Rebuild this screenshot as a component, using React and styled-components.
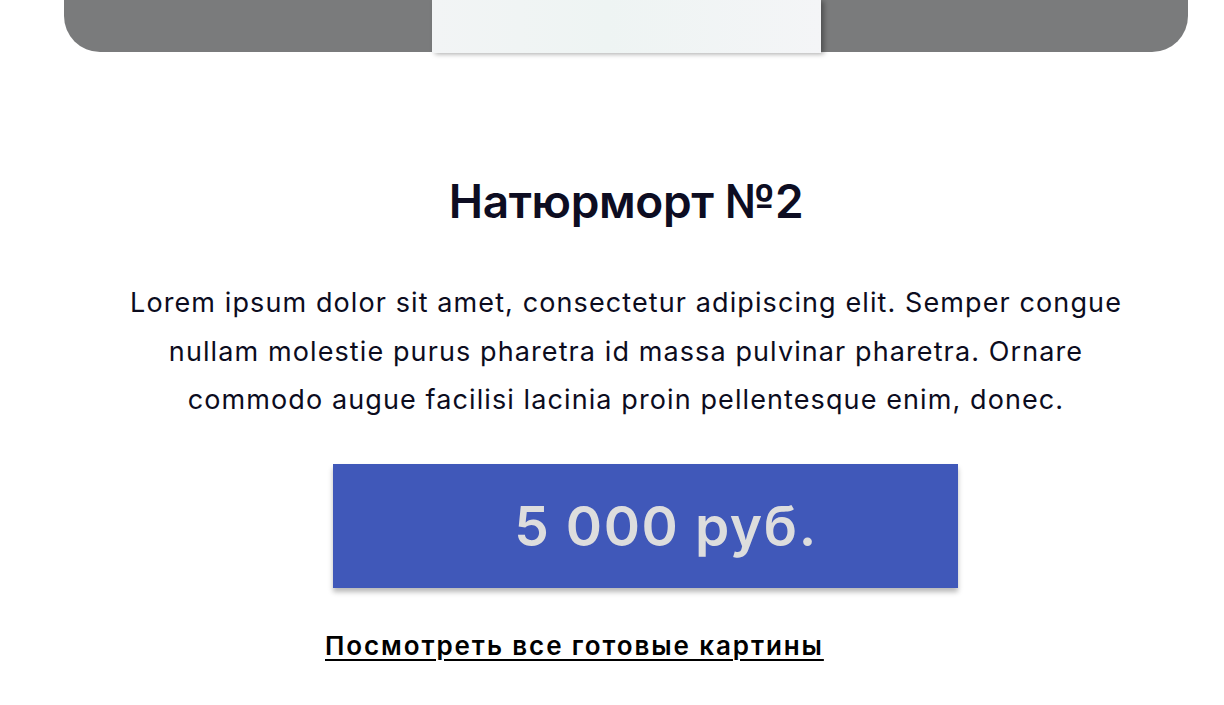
import React from "react";
import styled, { createGlobalStyle } from "styled-components";

const GlobalStyle = createGlobalStyle`
  html, body {
    margin: 0;
    padding: 0;
    background: #ffffff;
  }
  body {
    font-family: Inter, "Noto Sans", sans-serif;
    overflow: hidden;
  }
`;

const Page = styled.div`
  width: 1124px;
  margin-left: 64px;
  display: flex;
  flex-direction: column;
  align-items: center;
`;

const Banner = styled.div`
  width: 100%;
  height: 52px;
  background: #7a7b7c;
  border-radius: 0 0 36px 36px;
  display: flex;
  justify-content: center;
  align-items: flex-start;
`;

const Picture = styled.div`
  width: 389px;
  height: 53px;
  background: linear-gradient(90deg, #f2f4f5 0%, #eef4f3 45%, #f4f5f7 100%);
  box-shadow: 3px 1px 5px rgba(0, 0, 0, 0.35);
`;

const Title = styled.h1`
  margin: 121px 0 0;
  font-size: 46px;
  line-height: 56px;
  letter-spacing: -0.4px;
  font-weight: 600;
  color: #0d0d22;
`;

const Description = styled.p`
  margin: 50px 0 0;
  width: 1060px;
  font-size: 27px;
  line-height: 48.5px;
  letter-spacing: 1.1px;
  text-align: center;
  color: #0c0c1e;
`;

const Actions = styled.div`
  align-self: stretch;
  display: flex;
  flex-direction: column;
  align-items: flex-start;
  padding-left: 269px;
`;

const PriceButton = styled.button`
  margin-top: 39px;
  width: 625px;
  height: 124px;
  border: none;
  padding: 0 0 0 41px;
  background: #4058b9;
  box-shadow: 0 4px 5px rgba(0, 0, 0, 0.28);
  color: #dddddd;
  font-family: inherit;
  font-size: 55px;
  letter-spacing: 1.6px;
  font-weight: 600;
  cursor: pointer;
`;

const AllLink = styled.a`
  margin: 42px 0 0 -8px;
  font-size: 26px;
  letter-spacing: 1.9px;
  font-weight: 600;
  color: #000000;
  text-decoration: underline;
  text-underline-offset: 4px;
  text-decoration-thickness: 2px;
`;

export default function App() {
  return (
    <>
      <GlobalStyle />
      <Page>
        <Banner>
          <Picture />
        </Banner>
        <Title>Натюрморт №2</Title>
        <Description>
          Lorem ipsum dolor sit amet, consectetur adipiscing elit. Semper congue
          <br />
          nullam molestie purus pharetra id massa pulvinar pharetra. Ornare
          <br />
          commodo augue facilisi lacinia proin pellentesque enim, donec.
        </Description>
        <Actions>
          <PriceButton>5 000 руб.</PriceButton>
          <AllLink href="#">Посмотреть все готовые картины</AllLink>
        </Actions>
      </Page>
    </>
  );
}
